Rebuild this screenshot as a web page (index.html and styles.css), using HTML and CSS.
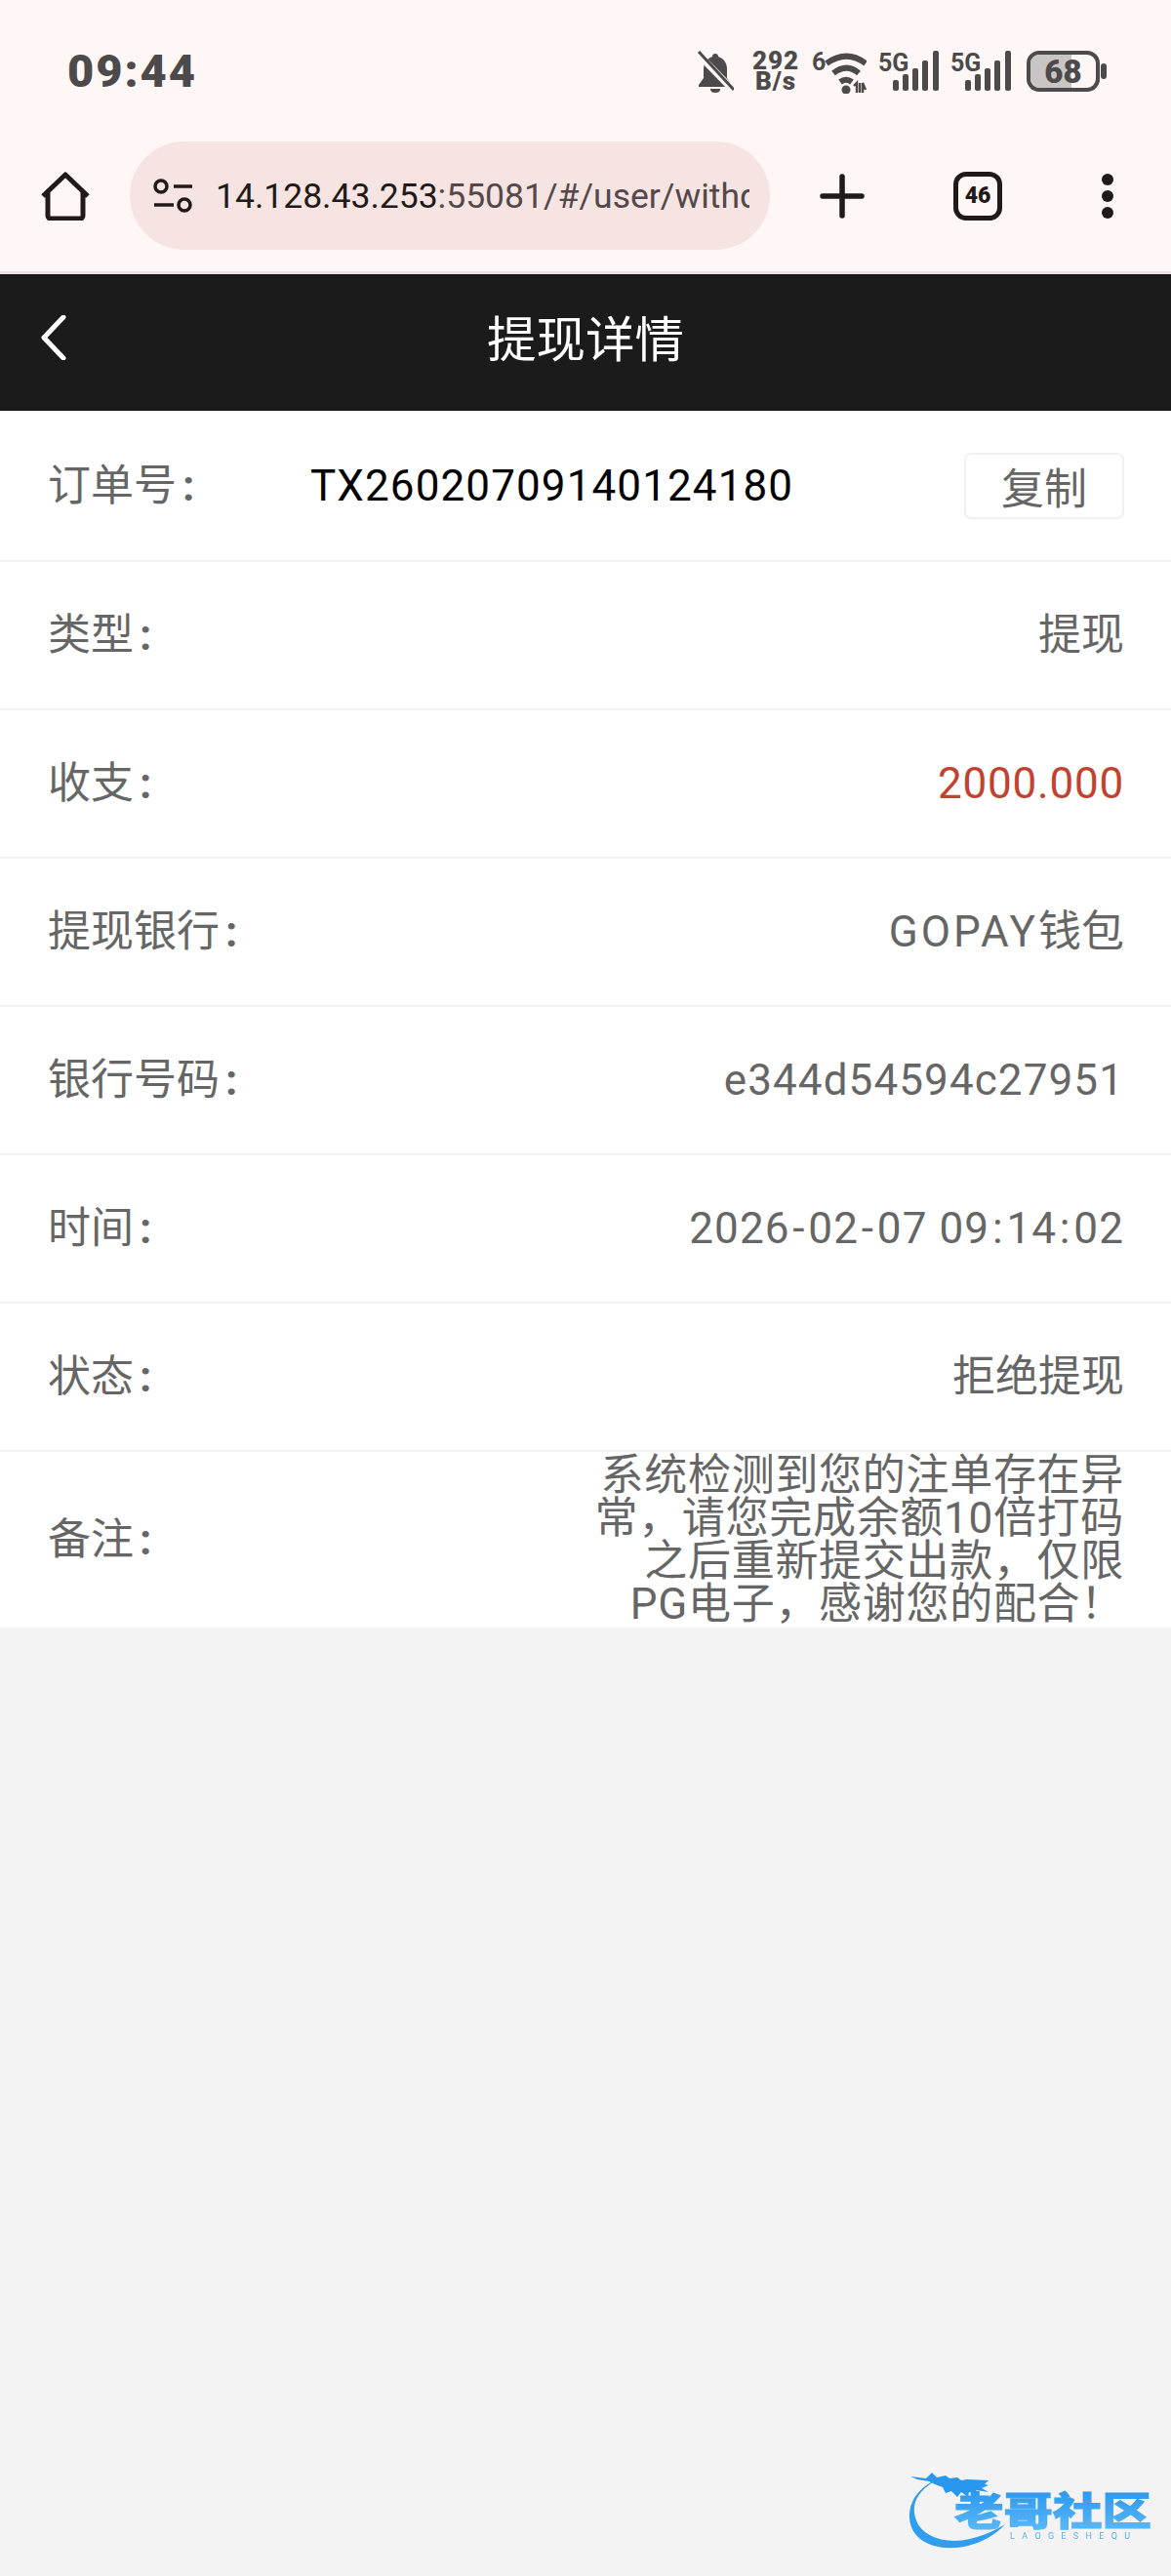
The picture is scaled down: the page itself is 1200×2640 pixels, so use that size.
FILE: index.html
```html
<!DOCTYPE html>
<html lang="zh-CN">
<head>
<meta charset="utf-8">
<title>提现详情</title>
<link rel="stylesheet" href="styles.css">
</head>
<body>
<div class="page">
  <div class="chrome">
    <div class="status">
      <span class="clock">09:44</span>
      <div class="status-icons">
        <svg class="i-bell" viewBox="0 0 38 44" width="38" height="44"><path d="M19 3c2 0 3 1 3 3 6 2 9 7 9 13v9l5 7v2H2v-2l5-7v-9c0-6 3-11 9-13 0-2 1-3 3-3z" fill="#4c4a4a"/><path d="M14 39h10c0 3-2 4-5 4s-5-1-5-4z" fill="#4c4a4a"/><path d="M0 2l37 38" stroke="#fff7f5" stroke-width="7"/><path d="M2 1l36 39" stroke="#4c4a4a" stroke-width="3"/></svg>
        <div class="speed"><span>292</span><span>B/s</span></div>
        <svg class="i-wifi" viewBox="0 0 56 44" width="56" height="44"><text x="0" y="20" class="svg-six">6</text><g fill="none" stroke="#4c4a4a" stroke-width="6"><path d="M15 13c14-10 27-10 40 0"/><path d="M22 23c9-7 18-7 26 0"/><path d="M29 32c4-3 8-3 12 0"/></g><circle cx="35" cy="40" r="4.5" fill="#4c4a4a"/><path d="M46 43V33l-3 3M49 43V33M52 43V33l3 7" fill="none" stroke="#4c4a4a" stroke-width="2.4"/></svg>
        <svg class="i-sig" viewBox="0 0 62 42" width="62" height="42"><text x="0" y="21" class="svg-5g">5G</text><g fill="#4c4a4a"><rect x="15" y="30" width="6" height="11" rx="2"/><rect x="25" y="24" width="6" height="17" rx="2"/><rect x="35" y="18" width="6" height="23" rx="2"/><rect x="45" y="10" width="6" height="31" rx="2"/><rect x="56" y="0" width="6" height="41" rx="2"/></g></svg>
        <svg class="i-sig" viewBox="0 0 62 42" width="62" height="42"><text x="0" y="21" class="svg-5g">5G</text><g fill="#4c4a4a"><rect x="15" y="30" width="6" height="11" rx="2"/><rect x="25" y="24" width="6" height="17" rx="2"/><rect x="35" y="18" width="6" height="23" rx="2"/><rect x="45" y="10" width="6" height="31" rx="2"/><rect x="56" y="0" width="6" height="41" rx="2"/></g></svg>
        <svg class="i-batt" viewBox="0 0 82 42" width="82" height="42"><rect x="2" y="2" width="71" height="38" rx="11" fill="#fff7f5" stroke="#4c4a4a" stroke-width="4"/><path d="M4 13a9 9 0 0 1 9-9h33v34H13a9 9 0 0 1-9-9z" fill="#c9c5c4"/><rect x="76" y="13" width="6" height="16" rx="3" fill="#4c4a4a"/><text x="37.500" y="33" class="svg-batt">68</text></svg>
      </div>
    </div>
    <div class="toolbar">
      <svg class="i-home" viewBox="0 0 50 50" width="50" height="50"><path d="M7 21v24a3 3 0 0 0 3 3h30a3 3 0 0 0 3-3V21M2 25L25 3l23 22" fill="none" stroke="#211a19" stroke-width="5" stroke-linejoin="round"/></svg>
      <div class="pill">
        <svg class="i-tune" viewBox="0 0 40 36" width="40" height="36"><g fill="none" stroke="#211a19" stroke-width="3.500"><circle cx="8" cy="8" r="6"/><path d="M21 8h19M1 27h20"/><circle cx="32" cy="27" r="6"/></g></svg>
        <div class="url"><span class="host">14.128.43.253</span><span class="path">:55081/#/user/withdraw-detail</span></div>
      </div>
      <svg class="i-plus" viewBox="0 0 46 46" width="46" height="46"><path d="M23 3v40M3 23h40" stroke="#211a19" stroke-width="5.500" stroke-linecap="round"/></svg>
      <div class="tabs">46</div>
      <div class="dots"><i></i><i></i><i></i></div>
    </div>
  </div>
  <div class="nav">
    <svg class="i-back" viewBox="0 0 26 46" width="26" height="46"><path d="M23 2L3 23l20 21" fill="none" stroke="#fff" stroke-width="5" stroke-linecap="round" stroke-linejoin="round"/></svg>
    <h1 class="nav-title">提现详情</h1>
  </div>
  <div class="list">
    <div class="row row-first">
      <span class="label label-wide">订单号<b class="colon">:</b></span>
      <span class="order ls1">TX26020709140124180</span>
      <button class="copy">复制</button>
    </div>
    <div class="row"><span class="label">类型<b class="colon">:</b></span><span class="value">提现</span></div>
    <div class="row"><span class="label">收支<b class="colon">:</b></span><span class="value red">2000.000</span></div>
    <div class="row"><span class="label">提现银行<b class="colon">:</b></span><span class="value"><span class="ls3">GOPAY</span>钱包</span></div>
    <div class="row"><span class="label">银行号码<b class="colon">:</b></span><span class="value ls1">e344d54594c27951</span></div>
    <div class="row"><span class="label">时间<b class="colon">:</b></span><span class="value ls1">2026<span class="sep">-</span>02<span class="sep">-</span>07 09<span class="sep">:</span>14<span class="sep">:</span>02</span></div>
    <div class="row"><span class="label">状态<b class="colon">:</b></span><span class="value">拒绝提现</span></div>
    <div class="row row-note"><span class="label">备注<b class="colon">:</b></span><span class="value note">系统检测到您的注单存在异常，请您完成余额10倍打码之后重新提交出款，仅限PG电子，感谢您的配合！</span></div>
  </div>
  <svg class="logo" viewBox="0 0 320 140" width="320" height="140">
    <defs><linearGradient id="lg" x1="0" y1="0" x2="0" y2="1"><stop offset="0" stop-color="#1e8fee"/><stop offset="1" stop-color="#62bdf6"/></linearGradient></defs>
    <path d="M76 44C60 54 54 67 58 80c5 20 32 28 56 22 14-3 26-9 36-15-9 10-22 18-38 22-30 7-58-3-60-28-1-16 8-30 24-38z" fill="#2f9df0"/>
    <path d="M53 38l16 2 6-6 5 5 9-2 4 3 8-1 4 3 6-1 22 1-4 4 4 1-7 3 7 4-13-2 3 4-10-2-1 5-7-5-4 5-6-6-6 2-3-6-8-3-6-3-12-2z" fill="#2a97ee"/>
    <text x="98" y="88" class="logo-cn" textLength="202" lengthAdjust="spacingAndGlyphs" fill="url(#lg)" stroke="url(#lg)" stroke-width="1">老哥社区</text>
    <text x="155" y="102" class="logo-en" textLength="123" lengthAdjust="spacing">LAOGESHEQU</text>
  </svg>
</div>
</body>
</html>
```
FILE: styles.css
```css
* { box-sizing: border-box; }
html, body { margin: 0; padding: 0; }
body { font-family: Roboto, "Noto Sans CJK SC", sans-serif; background: #f3f3f3; }
.page { position: relative; width: 1200px; height: 2640px; background: #f3f3f3; overflow: hidden; }

.chrome { height: 281px; background: #fff7f5; border-bottom: 3px solid #ebe3e1; }
.status { height: 145px; display: flex; justify-content: space-between; align-items: flex-start; padding: 53px 66px 0 69px; }
.clock { font-family: Roboto, sans-serif; font-weight: 900; font-size: 47px; line-height: 40px; letter-spacing: 2px; color: #4c4a4a; }
.status-icons { display: flex; align-items: flex-start; margin-top: -1px; }
.i-bell { margin-right: 19px; }
.speed { display: flex; flex-direction: column; align-items: center; width: 48px; margin-right: 13px; font-family: Roboto, sans-serif; font-weight: 900; color: #4c4a4a; font-size: 26px; line-height: 21px; letter-spacing: 1px; }
.i-wifi { margin-right: 12px; }
.i-sig { margin-right: 12px; }
.i-batt { margin-left: 4px; }
.svg-six { font: 700 25px Roboto, sans-serif; fill: #4c4a4a; }
.svg-5g { font: 700 25px "Liberation Sans Narrow", Roboto, sans-serif; fill: #4c4a4a; }
.svg-batt { font: 900 33px Roboto, sans-serif; fill: #4c4a4a; text-anchor: middle; }

.toolbar { display: flex; align-items: center; height: 111px; padding-left: 42px; }
.i-home { flex: none; margin-right: 41px; }
.pill { flex: none; width: 656px; height: 111px; border-radius: 56px; background: #f5e4e1; display: flex; align-items: center; padding: 0 21px 0 24px; }
.i-tune { flex: none; margin-right: 24px; }
.url { flex: 1; min-width: 0; overflow: hidden; white-space: nowrap; font-family: Roboto, sans-serif; font-size: 35.500px; line-height: 50px; }
.host { color: #211a19; }
.path { color: #54484a; }
.i-plus { flex: none; margin-left: 51px; }
.tabs { flex: none; width: 50px; height: 50px; margin-left: 91px; border: 5px solid #211a19; border-radius: 13px; font-family: Roboto, sans-serif; font-weight: 900; font-size: 23px; line-height: 40px; text-align: center; color: #211a19; }
.dots { flex: none; margin-left: 102px; display: flex; flex-direction: column; gap: 5px; }
.dots i { display: block; width: 12px; height: 12px; border-radius: 50%; background: #211a19; }

.nav { position: relative; height: 140px; padding-bottom: 14px; background: #1b1b1b; display: flex; align-items: center; justify-content: center; }
.nav-title { margin: 0; font-family: "Noto Sans CJK SC", sans-serif; font-size: 50.500px; font-weight: 400; line-height: 70px; color: #fff; }
.i-back { position: absolute; left: 42px; top: 42px; }

.list { background: #fff; }
.row { height: 152px; display: flex; align-items: center; padding: 0 48px 0 49px; border-bottom: 2px solid #f3f3f3; font-size: 44px; color: #666; }
.row-first { height: 155px; }
.row-note { height: 180px; border-bottom: 0; }
.label { flex: none; line-height: 60px; }
.label-wide { width: 269px; }
.colon { font-weight: 700; margin-left: 6px; }
.order { flex: 1; color: #000; line-height: 60px; }
.value { margin-left: auto; text-align: right; line-height: 60px; }
.ls1 { letter-spacing: 1.100px; }
.ls3 { letter-spacing: 3px; }
.sep { padding: 0 2.750px; }
.red { color: #c0432f; letter-spacing: 0.800px; }
.note { width: 546px; line-height: 44px; letter-spacing: 0.700px; }
.copy { flex: none; width: 164px; height: 68px; padding: 0; background: #fff; border: 2px solid #f1f1f1; border-radius: 7px; font-family: "Noto Sans CJK SC", sans-serif; font-size: 44px; line-height: 60px; color: #666; }

.logo { position: absolute; right: 0; bottom: 0; filter: blur(0.7px); }
.logo-cn { font-family: "Noto Sans CJK SC", sans-serif; font-weight: 900; font-size: 40px; }
.logo-en { font-family: Roboto, sans-serif; font-size: 9px; fill: #5aaef0; }
```
